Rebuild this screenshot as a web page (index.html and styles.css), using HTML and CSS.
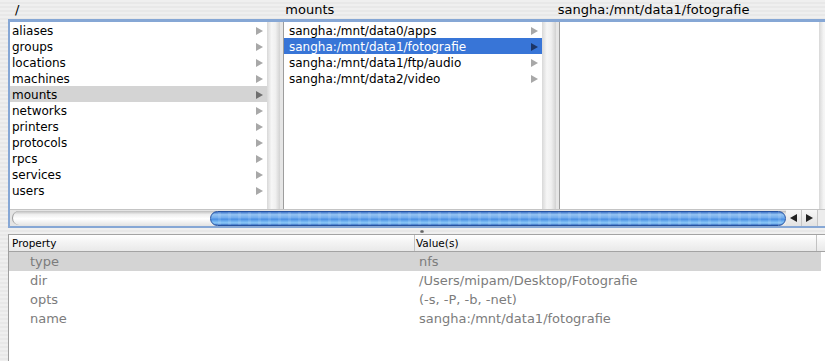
FILE: index.html
```html
<html>
  <head>
    <title>Directory Browser</title>
    <link rel="stylesheet" href="styles.css">
  </head>
  <body>
    <div class="titles">
      <div class="title title--first">/</div>
      <div class="title">mounts</div>
      <div class="title">sangha:/mnt/data1/fotografie</div>
    </div>

    <div class="browser">
      <div class="columns">
        <div class="column column--first">
          <ul class="list">
            <li class="item">aliases<span class="arrow"></span></li>
            <li class="item">groups<span class="arrow"></span></li>
            <li class="item">locations<span class="arrow"></span></li>
            <li class="item">machines<span class="arrow"></span></li>
            <li class="item item--inactive">mounts<span class="arrow"></span></li>
            <li class="item">networks<span class="arrow"></span></li>
            <li class="item">printers<span class="arrow"></span></li>
            <li class="item">protocols<span class="arrow"></span></li>
            <li class="item">rpcs<span class="arrow"></span></li>
            <li class="item">services<span class="arrow"></span></li>
            <li class="item">users<span class="arrow"></span></li>
          </ul>
          <div class="trough"></div>
          <div class="divider"></div>
        </div>

        <div class="column column--second">
          <ul class="list">
            <li class="item">sangha:/mnt/data0/apps<span class="arrow"></span></li>
            <li class="item item--selected">sangha:/mnt/data1/fotografie<span class="arrow"></span></li>
            <li class="item">sangha:/mnt/data1/ftp/audio<span class="arrow"></span></li>
            <li class="item">sangha:/mnt/data2/video<span class="arrow"></span></li>
          </ul>
          <div class="trough"></div>
          <div class="divider"></div>
        </div>

        <div class="column column--last">
          <ul class="list"></ul>
          <div class="trough"></div>
        </div>
      </div>

      <div class="hscroll">
        <div class="track">
          <div class="thumb"></div>
        </div>
        <div class="steppers">
          <span class="step step--left"></span>
          <span class="step step--right"></span>
        </div>
        <div class="corner"></div>
      </div>
    </div>

    <div class="splitter"><span class="dimple"></span></div>

    <div class="props">
      <div class="props-head">
        <div class="cell cell--key">Property</div>
        <div class="cell cell--value">Value(s)</div>
        <div class="cell cell--rest"></div>
      </div>
      <div class="props-row props-row--selected">
        <div class="cell cell--key">type</div>
        <div class="cell cell--value">nfs</div>
      </div>
      <div class="props-row">
        <div class="cell cell--key">dir</div>
        <div class="cell cell--value">/Users/mipam/Desktop/Fotografie</div>
      </div>
      <div class="props-row">
        <div class="cell cell--key">opts</div>
        <div class="cell cell--value">(-s, -P, -b, -net)</div>
      </div>
      <div class="props-row">
        <div class="cell cell--key">name</div>
        <div class="cell cell--value">sangha:/mnt/data1/fotografie</div>
      </div>
    </div>
  </body>
</html>
```

FILE: styles.css
```css
:root {
  --stripe-a: #efefef;
  --stripe-b: #e8e8e8;
  --focus: #86a7d5;
  --select: #3875d7;
  --inactive: #d4d4d4;
}
html, body {
  height: 100%;
}
body {
  margin: 0;
  overflow: hidden;
  display: flex;
  flex-direction: column;
  font-family: 'DejaVu Sans', 'Liberation Sans', sans-serif;
  background: repeating-linear-gradient(var(--stripe-a) 0 2px, var(--stripe-b) 2px 4px);
  color: #000;
}

/* column titles */
.titles {
  display: flex;
  flex-shrink: 0;
  height: 19px;
  margin-left: 10px;
  font-size: 13px;
  line-height: 19px;
}
.title {
  width: 276px;
  padding-left: 5px;
  box-sizing: border-box;
  white-space: nowrap;
}
.title--first {
  width: 274px;
}

/* browser */
.browser {
  flex-shrink: 0;
  margin-left: 8px;
  border-style: solid;
  border-color: var(--focus);
  border-width: 3px 0 2px 2px;
}
.columns {
  display: flex;
  height: 187px;
}
.column {
  display: flex;
  flex-shrink: 0;
  width: 276px;
}
.column--first {
  width: 274px;
}
.column--last {
  flex: 1;
}
.list {
  list-style: none;
  margin: 0;
  padding: 0;
  width: 258px;
  background: #fff;
  font-size: 12px;
  line-height: 16px;
}
.column--first .list {
  width: 257px;
}
.column--last .list {
  width: 259px;
}
.column--last .trough {
  flex: 1;
}
.item {
  display: flex;
  align-items: center;
  justify-content: space-between;
  height: 16px;
  padding: 1px 4px 0 5px;
  box-sizing: border-box;
  white-space: nowrap;
}
.column--first .item {
  padding-left: 2px;
}
.arrow {
  width: 0;
  height: 0;
  border-left: 7px solid #a8a8a8;
  border-top: 4px solid transparent;
  border-bottom: 4px solid transparent;
}
.item--inactive {
  background: var(--inactive);
}
.item--inactive .arrow {
  border-left-color: #6f6f6f;
}
.item--selected {
  background: var(--select);
  color: #fff;
}
.item--selected .arrow {
  border-left-color: #1c3566;
}
.trough {
  width: 14px;
  background: linear-gradient(to right, #d8d8d8, #f6f6f6 35%, #f0f0f0 65%, #d2d2d2);
}
.column--first .trough {
  width: 13px;
}
.divider {
  width: 3px;
  background: #e6e6e6;
  border-right: 1px solid #9d9d9d;
}

/* horizontal scroller */
.hscroll {
  display: flex;
  height: 17px;
  background: #e4e4e4;
  border-top: 1px solid #c4c4c4;
  box-sizing: border-box;
}
.track {
  flex: 1;
  display: flex;
  align-items: center;
  margin: 1px 0 1px 2px;
  border-left: 1px solid #9a9a9a;
  border-radius: 8px 0 0 8px;
  background: linear-gradient(#bdbdbd, #efefef 25%, #fff 55%, #e6e6e6);
}
.thumb {
  margin-left: 197px;
  flex: 1;
  height: 13px;
  border: 1px solid #2552a0;
  border-radius: 8px;
  background:
    repeating-linear-gradient(to right, rgba(255,255,255,0) 0 7px, rgba(255,255,255,0.1) 7px 10px),
    linear-gradient(#3f74c8, #93c3f3 20%, #71abec 45%, #4a8fe3 55%, #8ccaf9 85%, #3a6fc4);
}
.steppers {
  display: flex;
  width: 31px;
  background: linear-gradient(#f7f7f7, #e2e2e2);
}
.step {
  flex: 1;
  display: flex;
  align-items: center;
  justify-content: center;
}
.step--left {
  border-right: 1px solid #c6c6c6;
}
.step--left::before,
.step--right::before {
  content: '';
  width: 0;
  height: 0;
  border-top: 4px solid transparent;
  border-bottom: 4px solid transparent;
}
.step--left::before {
  border-right: 7px solid #222;
}
.step--right::before {
  border-left: 7px solid #222;
}
.corner {
  width: 7px;
  background: #ececec;
  border-left: 1px solid #c6c6c6;
}

/* split view handle */
.splitter {
  display: flex;
  flex-shrink: 0;
  justify-content: center;
  align-items: center;
  height: 6px;
  padding-left: 18px;
}
.dimple {
  width: 4px;
  height: 3px;
  border-radius: 2px;
  background: radial-gradient(#555, #aaa);
}

/* property table */
.props {
  flex: 1;
  margin-left: 8px;
  background: #fff;
  border-left: 1px solid #9e9e9e;
  border-top: 1px solid #a3a3a3;
}
.props-head {
  display: flex;
  height: 16px;
  border-bottom: 1px solid #a3a3a3;
  background: linear-gradient(#ffffff, #f3f3f3 50%, #e9e9e9);
  font-size: 10.5px;
  line-height: 16px;
}
.props-head .cell--key {
  padding-left: 3px;
  border-right: 1px solid #c2c2c2;
}
.props-head .cell--value {
  padding-left: 1px;
  width: 402px;
  border-right: 1px solid #c2c2c2;
}
.props-head .cell--rest {
  flex: 1;
}
.cell {
  box-sizing: border-box;
  white-space: nowrap;
}
.cell--key {
  width: 406px;
  padding-left: 21px;
}
.props-row {
  display: flex;
  width: 812px;
  height: 19px;
  font-size: 13px;
  line-height: 20px;
  color: #7c7c7c;
}
.props-row .cell--value {
  padding-left: 4px;
}
.props-row--selected {
  background: var(--inactive);
}
```
